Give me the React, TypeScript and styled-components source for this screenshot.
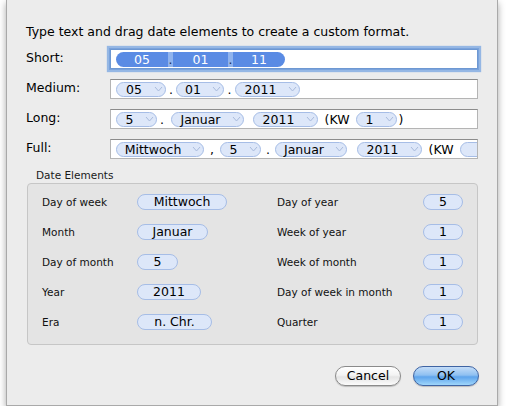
import React from "react";
import styled, { createGlobalStyle } from "styled-components";

const FONT = `"DejaVu Sans", "Lucida Grande", sans-serif`;

const GlobalStyle = createGlobalStyle`
  html, body { margin: 0; padding: 0; background: #ffffff; }
  body { font-family: ${FONT}; color: #000; }
`;

const Sheet = styled.div`
  margin-left: 6px;
  width: 492px;
  height: 406px;
  box-sizing: border-box;
  background: #ececec;
  border: 1px solid #a9a9a9;
  border-top: none;
  box-shadow: 0 3px 7px rgba(0, 0, 0, 0.35);
  padding: 24px 19px 0 19px;
  display: flex;
  flex-direction: column;
`;

const Title = styled.div`
  font-size: 12.5px;
  line-height: 16px;
  height: 16px;
  white-space: nowrap;
`;

const Formats = styled.div`
  display: flex;
  flex-direction: column;
  gap: 10px;
  margin-top: 9px;
`;

const FormatRow = styled.div`
  display: grid;
  grid-template-columns: 84px 368px;
  align-items: center;
  height: 20px;
`;

const RowLabel = styled.div`
  font-size: 12.5px;
  line-height: 16px;
  margin-top: -2px;
`;

const Field = styled.div<{ $focus?: boolean }>`
  height: 20px;
  box-sizing: border-box;
  background: #fff;
  border: 1px solid #b4b4b4;
  border-top-color: #8c8c8c;
  display: flex;
  align-items: center;
  padding-left: 5px;
  overflow: hidden;
  white-space: nowrap;
  font-size: 12.5px;
  ${(p) =>
    p.$focus
      ? `border-color: #6e98d2;
         box-shadow: 0 0 0 1px #7aa3dc, 0 0 1px 3px rgba(120, 165, 225, 0.75);`
      : ""}
`;

const Token = styled.span<{ $w: number }>`
  flex: none;
  display: inline-flex;
  align-items: center;
  width: ${(p) => p.$w}px;
  height: 15px;
  box-sizing: border-box;
  border: 1px solid #a6bde6;
  background: #dde7f9;
  border-radius: 8px;
  font-size: 12.5px;
  line-height: 13px;
`;

const TokenText = styled.span`
  flex: 1;
  text-align: center;
`;

const Arrow = styled.span`
  flex: none;
  width: 14px;
  display: flex;
  align-items: center;
  justify-content: center;
`;

const Sep = styled.span<{ $w: number }>`
  flex: none;
  width: ${(p) => p.$w}px;
  text-align: center;
  font-size: 12.5px;
`;

const SelBar = styled.div`
  display: flex;
  height: 15px;
  border-radius: 8px;
  overflow: hidden;
  color: #fff;
  font-size: 12.5px;
  line-height: 15px;
`;

const SelPart = styled.span<{ $w: number; $light?: boolean }>`
  width: ${(p) => p.$w}px;
  text-align: center;
  background: ${(p) => (p.$light ? "#8fb3ee" : "#5a8be4")};
  color: ${(p) => (p.$light ? "#1b2a55" : "#fff")};
`;

const GroupLabel = styled.div`
  font-size: 10.5px;
  line-height: 13px;
  margin: 10px 0 1px 10px;
  color: #1a1a1a;
`;

const ElementsBox = styled.div`
  margin-left: 1px;
  width: 451px;
  height: 162px;
  box-sizing: border-box;
  background: #e4e4e4;
  border: 1px solid #c6c6c6;
  border-radius: 4px;
  padding: 10px 14px 0 14px;
  display: grid;
  grid-template-columns: 95px 140px 146px 40px;
  grid-auto-rows: 16px;
  row-gap: 14px;
  align-items: center;
`;

const ElLabel = styled.div`
  font-size: 10.5px;
  line-height: 13px;
  color: #111;
`;

const ElToken = styled.div<{ $w: number }>`
  width: ${(p) => p.$w}px;
  height: 16px;
  box-sizing: border-box;
  border: 1px solid #a6bde6;
  background: #dde7f9;
  border-radius: 8px;
  font-size: 12.5px;
  line-height: 14px;
  text-align: center;
`;

const Buttons = styled.div`
  display: flex;
  justify-content: flex-end;
  gap: 12px;
  margin-top: 21px;
  margin-right: -1px;
`;

const Button = styled.button<{ $primary?: boolean }>`
  width: 66px;
  height: 20px;
  box-sizing: border-box;
  border-radius: 10px;
  font-family: ${FONT};
  font-size: 12.5px;
  line-height: 16px;
  padding: 0;
  color: #000;
  border: 1px solid ${(p) => (p.$primary ? "#3f64a3" : "#8a8a8a")};
  background: ${(p) =>
    p.$primary
      ? "linear-gradient(#c4ddf8 0%, #8fc0f1 45%, #5ea4ec 55%, #9fd6fb 100%)"
      : "linear-gradient(#ffffff 0%, #f3f3f3 45%, #e4e4e4 55%, #fbfbfb 100%)"};
  box-shadow: 0 1px 1px rgba(0, 0, 0, 0.2);
`;

const Chevron = () => (
  <svg width="9" height="6" viewBox="0 0 9 6">
    <path d="M1 1 L4.5 5 L8 1" fill="none" stroke="#a9bbdc" strokeWidth="1" />
  </svg>
);

const Pill = ({ w, children }: { w: number; children?: React.ReactNode }) => (
  <Token $w={w}>
    <TokenText>{children}</TokenText>
    <Arrow>
      <Chevron />
    </Arrow>
  </Token>
);

const elements: [string, string, number, string, string][] = [
  ["Day of week", "Mittwoch", 90, "Day of year", "5"],
  ["Month", "Januar", 71, "Week of year", "1"],
  ["Day of month", "5", 41, "Week of month", "1"],
  ["Year", "2011", 64, "Day of week in month", "1"],
  ["Era", "n. Chr.", 75, "Quarter", "1"],
];

export default function App() {
  return (
    <>
      <GlobalStyle />
      <Sheet>
        <Title>Type text and drag date elements to create a custom format.</Title>
        <Formats>
          <FormatRow>
            <RowLabel>Short:</RowLabel>
            <Field $focus>
              <SelBar>
                <SelPart $w={52}>05</SelPart>
                <SelPart $w={5} $light>.</SelPart>
                <SelPart $w={55}>01</SelPart>
                <SelPart $w={5} $light>.</SelPart>
                <SelPart $w={52}>11</SelPart>
              </SelBar>
            </Field>
          </FormatRow>
          <FormatRow>
            <RowLabel>Medium:</RowLabel>
            <Field>
              <Pill w={50}>05</Pill>
              <Sep $w={10}>.</Sep>
              <Pill w={48}>01</Pill>
              <Sep $w={11}>.</Sep>
              <Pill w={65}>2011</Pill>
            </Field>
          </FormatRow>
          <FormatRow>
            <RowLabel>Long:</RowLabel>
            <Field>
              <Pill w={41}>5</Pill>
              <Sep $w={10}>.</Sep>
              <Sep $w={4} />
              <Pill w={73}>Januar</Pill>
              <Sep $w={9} />
              <Pill w={65}>2011</Pill>
              <Sep $w={38}>(KW</Sep>
              <Pill w={41}>1</Pill>
              <Sep $w={8}>)</Sep>
            </Field>
          </FormatRow>
          <FormatRow>
            <RowLabel>Full:</RowLabel>
            <Field>
              <Pill w={88}>Mittwoch</Pill>
              <Sep $w={16}>,</Sep>
              <Pill w={41}>5</Pill>
              <Sep $w={14}>.</Sep>
              <Pill w={72}>Januar</Pill>
              <Sep $w={10} />
              <Pill w={65}>2011</Pill>
              <Sep $w={38}>(KW</Sep>
              <Pill w={64} />
            </Field>
          </FormatRow>
        </Formats>
        <GroupLabel>Date Elements</GroupLabel>
        <ElementsBox>
          {elements.map(([l1, v1, w1, l2, v2]) => (
            <React.Fragment key={l1}>
              <ElLabel>{l1}</ElLabel>
              <div>
                <ElToken $w={w1}>{v1}</ElToken>
              </div>
              <ElLabel>{l2}</ElLabel>
              <ElToken $w={40}>{v2}</ElToken>
            </React.Fragment>
          ))}
        </ElementsBox>
        <Buttons>
          <Button>Cancel</Button>
          <Button $primary>OK</Button>
        </Buttons>
      </Sheet>
    </>
  );
}
